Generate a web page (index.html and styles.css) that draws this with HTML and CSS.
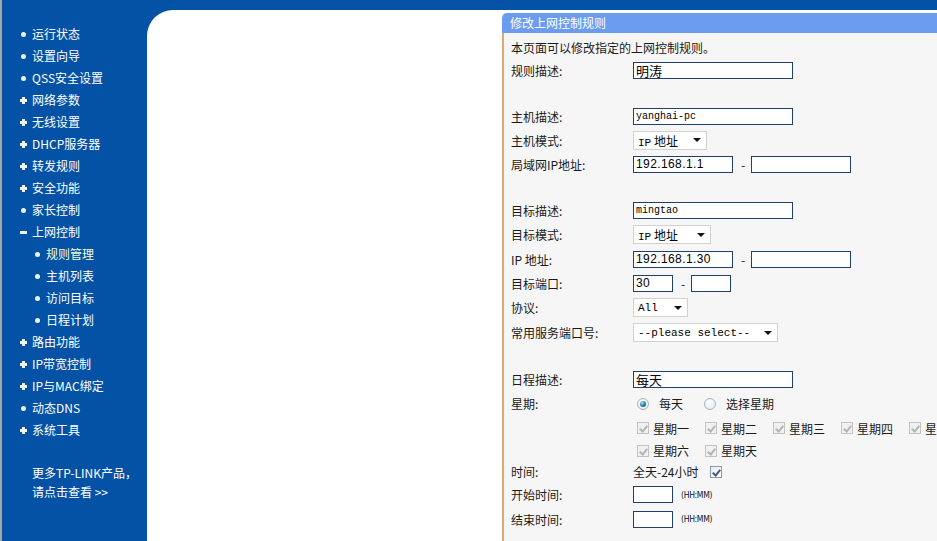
FILE: index.html
```html
<!DOCTYPE html>
<html lang="zh-CN">
<head>
<meta charset="utf-8">
<title>修改上网控制规则</title>
<link rel="stylesheet" href="styles.css">
</head>
<body>
<div class="page">
  <aside class="sidebar">
    <ul class="nav">
      <li><span class="b dot"></span>运行状态</li>
      <li><span class="b dot"></span>设置向导</li>
      <li><span class="b dot"></span>QSS安全设置</li>
      <li><span class="b plus"></span>网络参数</li>
      <li><span class="b plus"></span>无线设置</li>
      <li><span class="b plus"></span>DHCP服务器</li>
      <li><span class="b plus"></span>转发规则</li>
      <li><span class="b plus"></span>安全功能</li>
      <li><span class="b dot"></span>家长控制</li>
      <li><span class="b minus"></span>上网控制</li>
      <li class="sub active"><span class="b dot"></span>规则管理</li>
      <li class="sub"><span class="b dot"></span>主机列表</li>
      <li class="sub"><span class="b dot"></span>访问目标</li>
      <li class="sub"><span class="b dot"></span>日程计划</li>
      <li><span class="b plus"></span>路由功能</li>
      <li><span class="b plus"></span>IP带宽控制</li>
      <li><span class="b plus"></span>IP与MAC绑定</li>
      <li><span class="b dot"></span>动态DNS</li>
      <li><span class="b plus"></span>系统工具</li>
    </ul>
    <div class="more">更多TP-LINK产品，<br>请点击查看 &gt;&gt;</div>
  </aside>
  <main class="main">
    <div class="content">
      <section class="panel">
        <div class="panel-head">修改上网控制规则</div>
        <div class="panel-body">
          <div class="form">
            <div class="intro">本页面可以修改指定的上网控制规则。</div>

            <div class="lbl">规则描述:</div>
            <div class="fld"><input class="txt w160 cjk" value="明涛" spellcheck="false"></div>

            <div class="lbl"></div><div class="fld"></div>

            <div class="lbl">主机描述:</div>
            <div class="fld"><input class="txt w160 mono" value="yanghai-pc" spellcheck="false"></div>

            <div class="lbl">主机模式:</div>
            <div class="fld"><div class="sel w74"><span><span class="mono">IP</span> 地址</span><span class="arrow"></span></div></div>

            <div class="lbl">局域网IP地址:</div>
            <div class="fld"><input class="txt w100 num" value="192.168.1.1" spellcheck="false"><span class="dash">-</span><input class="txt w100 num" value="" spellcheck="false"></div>

            <div class="lbl"></div><div class="fld"></div>

            <div class="lbl">目标描述:</div>
            <div class="fld"><input class="txt w160 mono" value="mingtao" spellcheck="false"></div>

            <div class="lbl">目标模式:</div>
            <div class="fld"><div class="sel w78"><span><span class="mono">IP</span> 地址</span><span class="arrow"></span></div></div>

            <div class="lbl">IP 地址:</div>
            <div class="fld"><input class="txt w100 num" value="192.168.1.30" spellcheck="false"><span class="dash">-</span><input class="txt w100 num" value="" spellcheck="false"></div>

            <div class="lbl">目标端口:</div>
            <div class="fld"><input class="txt w40 num" value="30" spellcheck="false"><span class="dash">-</span><input class="txt w40 num" value="" spellcheck="false"></div>

            <div class="lbl">协议:</div>
            <div class="fld"><div class="sel w55"><span class="mono">All</span><span class="arrow"></span></div></div>

            <div class="lbl">常用服务端口号:</div>
            <div class="fld"><div class="sel w145"><span class="mono">--please select--</span><span class="arrow"></span></div></div>

            <div class="lbl"></div><div class="fld"></div>

            <div class="lbl">日程描述:</div>
            <div class="fld"><input class="txt w160 cjk" value="每天" spellcheck="false"></div>

            <div class="lbl">星期:</div>
            <div class="fld inset">
              <span class="radio checked"></span><span class="rlabel">每天</span>
              <span class="radio"></span><span class="rlabel">选择星期</span>
            </div>

            <div class="lbl"></div>
            <div class="fld inset days">
              <span class="day"><span class="cb dis"></span>星期一</span>
              <span class="day"><span class="cb dis"></span>星期二</span>
              <span class="day"><span class="cb dis"></span>星期三</span>
              <span class="day"><span class="cb dis"></span>星期四</span>
              <span class="day"><span class="cb dis"></span>星期五</span>
            </div>

            <div class="lbl"></div>
            <div class="fld inset days">
              <span class="day"><span class="cb dis"></span>星期六</span>
              <span class="day"><span class="cb dis"></span>星期天</span>
            </div>

            <div class="lbl">时间:</div>
            <div class="fld"><span>全天-24小时</span><span class="cb on"></span></div>

            <div class="lbl">开始时间:</div>
            <div class="fld"><input class="txt w40 num" value="" spellcheck="false"><span class="hint">(HH:MM)</span></div>

            <div class="lbl">结束时间:</div>
            <div class="fld"><input class="txt w40 num" value="" spellcheck="false"><span class="hint">(HH:MM)</span></div>
          </div>
        </div>
      </section>
    </div>
  </main>
</div>
</body>
</html>
```

FILE: styles.css
```css
* { box-sizing: border-box; }
html, body { margin: 0; padding: 0; }
body {
  width: 937px;
  height: 541px;
  overflow: hidden;
  background: #fff;
  font-family: "Noto Sans CJK SC", "Liberation Sans", sans-serif;
  font-size: 12px;
  color: #1a1a1a;
}
.page { display: flex; height: 541px; }

/* ---------- sidebar ---------- */
.sidebar {
  width: 147px;
  flex: none;
  background: #0452a5;
  border-left: 2px solid #a6a6a6;
  color: #fff;
  padding-top: 23px;
}
.nav { list-style: none; margin: 0; padding: 0; }
.nav li {
  height: 22px;
  display: flex;
  align-items: center;
  gap: 4px;
  padding-left: 17px;
  white-space: nowrap;
  line-height: 22px;
}
.nav li.sub { padding-left: 31px; }
.nav li.active { color: #f0ffd8; }
.b { width: 9px; height: 9px; flex: none; position: relative; }
.b.dot::before {
  content: ""; position: absolute; left: 2px; top: 2px;
  width: 5px; height: 5px; border-radius: 50%; background: #eef6ee;
}
.b.plus::before, .b.plus::after, .b.minus::before {
  content: ""; position: absolute; background: #eef6ee;
}
.b.plus::before, .b.minus::before { left: 1px; top: 3px; width: 7px; height: 3px; }
.b.plus::after { left: 3px; top: 1px; width: 3px; height: 7px; }
.more {
  margin-top: 22px;
  padding-left: 30px;
  line-height: 19px;
  white-space: nowrap;
}

/* ---------- main area ---------- */
.main {
  flex: 1;
  min-width: 0;
  background: #0452a5;
  padding-top: 10px;
}
.content {
  height: 100%;
  background: #fff;
  border-top-left-radius: 26px;
  padding: 3px 0 0 355px;
  overflow: hidden;
}
.panel { width: 620px; height: 100%; display: flex; flex-direction: column; }
.panel-head {
  height: 20px;
  line-height: 20px;
  background: #6c9cf0;
  color: #fff;
  border-top-left-radius: 5px;
  padding-left: 8px;
  flex: none;
}
.panel-body {
  flex: 1;
  background: #f6f6f6;
  border-left: 2px solid #e4a86a;
  padding: 2px 0 0 7px;
}

/* ---------- form ---------- */
.form {
  display: grid;
  grid-template-columns: 122px 1fr;
  grid-template-rows: 24px 23px 23px 23px 24px 24px 23px 23px 25px 24px 24px 25px 25px 23px 23px 25px 24px 21px 21px 25px 24px;
}
.intro { grid-column: 1 / -1; display: flex; align-items: center; white-space: nowrap; }
.lbl { display: flex; align-items: center; white-space: nowrap; }
.fld { display: flex; align-items: center; white-space: nowrap; }
.fld.inset { padding-left: 4px; }

.txt {
  height: 17px;
  margin: 0;
  border: 1px solid #22406c;
  background: #fff;
  padding: 0 2px;
  color: #000;
  outline: none;
}
.cjk { font-family: "Noto Sans CJK SC", sans-serif; font-size: 13px; }
.mono { font-family: "Liberation Mono", monospace; font-size: 10px; }
.num { font-family: "Liberation Sans", sans-serif; font-size: 12px; letter-spacing: 0.4px; }
.w160 { width: 160px; }
.w100 { width: 100px; }
.w40 { width: 40px; }
.dash { margin: 0 6px 0 8px; }

.sel {
  height: 19px;
  border: 1px solid #d2d2d2;
  background: #fff;
  display: flex;
  align-items: center;
  justify-content: space-between;
  padding: 0 5px 0 4px;
  color: #000;
}
.sel .mono { font-size: 11px; }
.w74 { width: 74px; }
.w78 { width: 78px; }
.w55 { width: 55px; }
.w145 { width: 145px; }
.arrow {
  width: 0; height: 0;
  border-left: 4px solid transparent;
  border-right: 4px solid transparent;
  border-top: 4px solid #111;
  flex: none;
}

.radio {
  width: 12px; height: 12px; flex: none;
  border-radius: 50%;
  border: 1px solid #a9b2ba;
  background: radial-gradient(circle at 40% 35%, #ffffff, #e2e6ea);
  position: relative;
}
.radio.checked::after {
  content: ""; position: absolute; left: 2px; top: 2px;
  width: 6px; height: 6px; border-radius: 50%;
  background: radial-gradient(circle at 35% 30%, #9fe6ff, #1f7aa8 55%, #0d4f78);
}
.radio + .rlabel { margin-left: 10px; margin-right: 21px; }

.day { width: 68px; display: inline-flex; align-items: center; gap: 4px; flex: none; }
.cb {
  width: 12px; height: 12px; flex: none;
  border: 1px solid #c3c3c3;
  background: #f1f1f1;
  position: relative;
}
.cb::after {
  content: ""; position: absolute; left: 3px; top: 1px;
  width: 3px; height: 6px;
  border: solid #b4b4b4;
  border-width: 0 2px 2px 0;
  transform: rotate(40deg);
}
.days { color: #1a1a1a; }
.cb.on { margin-left: 11px; border-color: #8e9aa8; background: linear-gradient(135deg, #e8ecf0, #ffffff); }
.cb.on::after { border-color: #4a5688; }

.hint {
  margin-left: 8px;
  font-family: "DejaVu Sans Condensed", "Liberation Sans", sans-serif;
  font-size: 8.5px;
  letter-spacing: -0.3px;
  color: #111;
}
```
